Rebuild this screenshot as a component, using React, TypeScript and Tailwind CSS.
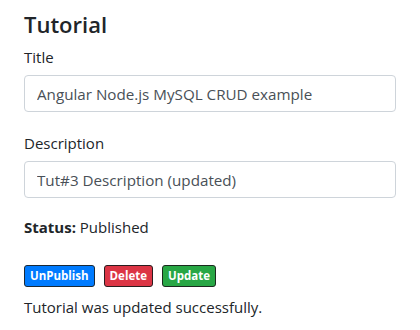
export default function App() {
  const font = { fontFamily: '"Open Sans", "Noto Sans", sans-serif' };
  return (
    <div className="w-[420px] h-[330px] bg-white text-[#212529]" style={font}>
      <div className="pl-6 pr-6 pt-[10px] w-[420px]">
        <h4 className="text-[22px] font-semibold leading-[29px] mb-[6px]">Tutorial</h4>
        <form className="flex flex-col">
          <label className="text-[15px] leading-[24px] mb-[6px]">Title</label>
          <input
            className="w-[372px] h-[37px] border border-[#ced4da] rounded-[4px] px-3 text-[15.2px] text-[#495057] outline-none"
            defaultValue="Angular Node.js MySQL CRUD example"
          />
          <label className="text-[15px] leading-[24px] mt-[19px] mb-[6px]">Description</label>
          <input
            className="w-[372px] h-[37px] border border-[#ced4da] rounded-[4px] px-3 text-[15.2px] text-[#495057] outline-none"
            defaultValue="Tut#3 Description (updated)"
          />
          <div className="text-[15px] leading-[24px] mt-[17px]">
            <strong className="font-bold">Status:</strong> Published
          </div>
        </form>
        <div className="flex gap-[9px] mt-[26px]">
          <button className="h-[22px] px-[5px] rounded-[3px] border border-[#1c2a36] bg-[#007bff] text-white text-[11.5px] font-bold leading-none">
            UnPublish
          </button>
          <button className="h-[22px] px-[5px] rounded-[3px] border border-[#2a1d1f] bg-[#dc3545] text-white text-[11.5px] font-bold leading-none">
            Delete
          </button>
          <button className="h-[22px] px-[5px] rounded-[3px] border border-[#1b2a1e] bg-[#28a745] text-white text-[11.5px] font-bold leading-none">
            Update
          </button>
        </div>
        <p className="text-[15px] leading-[24px] mt-[8px]">Tutorial was updated successfully.</p>
      </div>
    </div>
  );
}
